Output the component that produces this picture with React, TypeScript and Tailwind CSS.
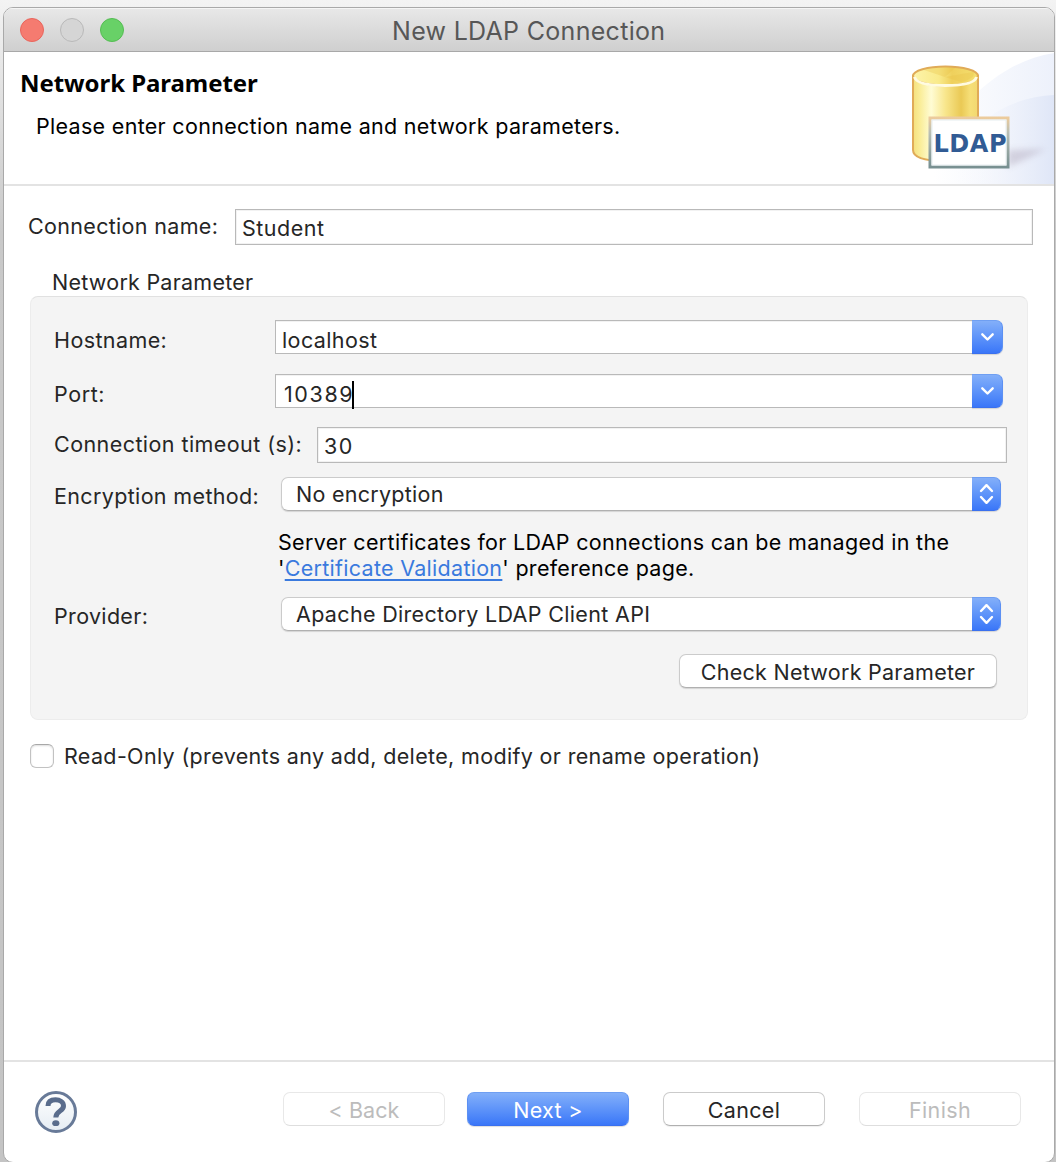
import type { ReactNode } from "react";

const text = "font-['Inter',sans-serif] text-[21.5px] leading-[26px] whitespace-nowrap";

function Chevrons({ both = false }: { both?: boolean }) {
  return (
    <svg viewBox="0 0 30 34" className="h-[34px] w-[30px]" fill="none" stroke="white" strokeWidth="2.4" strokeLinecap="round" strokeLinejoin="round">
      {both ? (
        <>
          <path d="M9 14 14.500 8.200 20 14" />
          <path d="M9 20 14.500 25.800 20 20" />
        </>
      ) : (
        <path d="M10.3 14.3 15.5 19.5 20.7 14.3" />
      )}
    </svg>
  );
}

function TextField({ className, children }: { className: string; children: ReactNode }) {
  return (
    <div className={`${text} box-border border border-[#b9b9b9] bg-white text-[#262626] shadow-[inset_0_0_0_1px_#f2f2f2] ${className}`}>
      {children}
    </div>
  );
}

function Combo({ className, children }: { className: string; children: ReactNode }) {
  return (
    <div className={`flex h-[34px] w-[728px] ${className}`}>
      <div className={`${text} h-full w-[697px] border border-r-0 border-[#b9b9b9] bg-white pt-[6px] text-[#262626] shadow-[inset_0_1px_0_#f2f2f2]`}>{children}</div>
      <div className="h-full w-[31px] rounded-r-[7px] border border-l-0 border-t-[#6f9ff2] border-r-[#5c90f3] border-b-[#3a70ee] bg-linear-to-b from-[#83aff9] to-[#3a76f8] shadow-[0_1px_1px_#0002]">
        <div className="-mt-px"><Chevrons /></div>
      </div>
    </div>
  );
}

function Select({ className, children }: { className: string; children: ReactNode }) {
  return (
    <div className={`flex h-[34px] w-[720px] rounded-[7px] shadow-[0_1px_1px_#0002] ${className}`}>
      <div className={`${text} h-full w-[691px] rounded-l-[7px] border border-r-0 border-[#cbcbcb] border-b-[#b0b0b0] bg-white pt-[3px] pl-[14px] text-[#262626]`}>{children}</div>
      <div className="h-full w-[29px] rounded-r-[7px] border border-l-0 border-t-[#6f9ff2] border-r-[#5c90f3] border-b-[#3a70ee] bg-linear-to-b from-[#83aff9] to-[#3a76f8]">
        <div className="-mt-px w-[30px]"><Chevrons both /></div>
      </div>
    </div>
  );
}

function Button({ className, children }: { className: string; children: ReactNode }) {
  return (
    <button className={`${text} flex h-[34px] justify-center rounded-[7px] border pt-[4px] ${className}`}>{children}</button>
  );
}

function LdapBanner() {
  return (
    <svg viewBox="0 0 150 132" className="ml-auto h-[132px] w-[150px] shrink-0">
      <defs>
        <linearGradient id="body" x1="0" x2="1">
          <stop offset="0" stopColor="#f5e07c" />
          <stop offset=".12" stopColor="#faee9c" />
          <stop offset=".28" stopColor="#fffcd4" />
          <stop offset=".5" stopColor="#f8e68c" />
          <stop offset=".74" stopColor="#eac955" />
          <stop offset=".88" stopColor="#f6df78" />
          <stop offset="1" stopColor="#f2d870" />
        </linearGradient>
        <linearGradient id="lid" x1="0" x2="1">
          <stop offset="0" stopColor="#fdf4aa" />
          <stop offset=".4" stopColor="#f9ea8a" />
          <stop offset=".6" stopColor="#efd05c" />
          <stop offset="1" stopColor="#f5df70" />
        </linearGradient>
        <linearGradient id="sky" x1="0" x2="1">
          <stop offset=".2" stopColor="#fff" />
          <stop offset="1" stopColor="#edf1fb" />
        </linearGradient>
        <linearGradient id="hill" x1="0" x2="1">
          <stop offset=".2" stopColor="#fff" stopOpacity="0" />
          <stop offset="1" stopColor="#dfe6f7" />
        </linearGradient>
        <linearGradient id="frame" x1="0" y1="0" x2="0" y2="1">
          <stop offset="0" stopColor="#eccb9c" />
          <stop offset=".3" stopColor="#b9bfb5" />
          <stop offset="1" stopColor="#789091" />
        </linearGradient>
        <filter id="soft" x="-30%" y="-50%" width="160%" height="200%"><feGaussianBlur stdDeviation="3" /></filter>
      </defs>
      <path d="M0 132C20 112 50 60 76 38 96 20 120 6 150 1V132Z" fill="url(#sky)" />
      <path d="M10 132C45 112 70 72 96 58 114 48 132 44 150 43V132Z" fill="url(#hill)" />
      <path d="M104 98 142 97 122 107 104 115Z" fill="#b0a8bc" opacity=".45" filter="url(#soft)" />
      <path d="M9 24V98C9 106 22 109 41 109 60 109 74 105 74 98V24Z" fill="url(#body)" stroke="#e0ab58" strokeWidth="2" />
      <ellipse cx="41.500" cy="24" rx="32.500" ry="9.500" fill="url(#lid)" stroke="#e0ab58" strokeWidth="2" />
      <path d="M10.500 25C12 31 24 33.500 41.500 33.500S71 31 72.500 25" fill="none" stroke="#fffbe0" strokeWidth="3" />
      <path d="M41 25 20 18C29 15 43 14.500 51 16ZM41 25 69 20C72 24 66 28 57 30Z" fill="#e8bf45" opacity=".3" />
      <rect x="26" y="66" width="78" height="49" fill="#fff" stroke="url(#frame)" strokeWidth="3" />
      <rect x="28" y="68" width="74" height="45" fill="none" stroke="#e6edf0" />
      <text x="29.500" y="99.500" textLength="73" lengthAdjust="spacing" fontFamily="DejaVu Sans" fontWeight="bold" fontSize="24" fill="#315b94">LDAP</text>
    </svg>
  );
}

export default function App() {
  return (
    <div className="h-[1162px] w-[1056px] overflow-hidden bg-linear-to-b from-[#f3f3f3] via-[#c9c9c9] via-20% to-[#c4c4c4] pt-[7px] pl-[3px]">
      <div className="flex h-[1156px] w-[1052px] flex-col overflow-hidden rounded-[10px] border border-[#a9a9a9] bg-white">
        <div className="flex h-[44px] shrink-0 border-b border-[#a8a8a8] bg-linear-to-b from-[#e8e8e8] to-[#cfcfcf] pl-4 shadow-[inset_0_1px_0_#f5f5f5]">
          <div className="mt-[10px] flex w-[372px] gap-4">
            <i className="size-6 rounded-full border border-[#e9655c] bg-[#f57b70]" />
            <i className="size-6 rounded-full border border-[#b9b9b9] bg-[#d5d5d5]" />
            <i className="size-6 rounded-full border border-[#55bd53] bg-[#68d167]" />
          </div>
          <h1 className="mt-[8px] font-['Inter',sans-serif] text-[25px] leading-[30px] tracking-[0.3px] whitespace-nowrap text-[#575757]">New LDAP Connection</h1>
        </div>

        <header className="flex h-[134px] shrink-0 border-b-2 border-[#e3e3e3]">
          <div>
            <h2 className="mt-[15px] ml-4 font-['Noto_Sans',sans-serif] text-2xl leading-8 font-bold tracking-[-0.06px] whitespace-nowrap text-black">Network Parameter</h2>
            <p className={`${text} mt-[14px] ml-8 tracking-[0.302px] text-black`}>Please enter connection name and network parameters.</p>
          </div>
          <LdapBanner />
        </header>

        <main className="flex-1 text-[#262626]">
          <div className="mt-[23px] flex h-9 pl-6">
            <label className={`${text} mt-1 w-[207px] tracking-[0.32px]`}>Connection name:</label>
            <TextField className="h-9 w-[798px] pt-[5px] pl-[6px] tracking-[0.5px]">Student</TextField>
          </div>

          <h3 className={`${text} mt-6 ml-12 tracking-[0.24px]`}>Network Parameter</h3>
          <section className="mt-px ml-[26px] h-[424px] w-[998px] rounded-[8px] border border-[#ececec] border-t-[#e1e1e1] bg-[#f4f4f4] pt-[23px] pl-[23px]">
            <div className="flex h-[54px]">
              <label className={`${text} mt-[7px] w-[221px] tracking-[0.4px]`}>Hostname:</label>
              <Combo className="tracking-[0.4px]"><span className="ml-[6px]">localhost</span></Combo>
            </div>
            <div className="flex h-[53px]">
              <label className={`${text} mt-[7px] w-[221px] tracking-[0.6px]`}>Port:</label>
              <Combo className="tracking-[1.6px]">
                <span className="ml-[8px] inline-block">10389</span><i className="ml-[-2px] inline-block h-[28px] w-[2px] bg-black align-[-7px]" />
              </Combo>
            </div>
            <div className="flex h-[50px]">
              <label className={`${text} mt-[4px] w-[263px] tracking-[0.43px]`}>Connection timeout (s):</label>
              <TextField className="h-9 w-[690px] pt-[5px] pl-[6px] tracking-[1.4px]">30</TextField>
            </div>
            <div className="flex h-[53px]">
              <label className={`${text} mt-[6px] w-[227px] tracking-[0.35px]`}>Encryption method:</label>
              <Select className="tracking-[0.27px]">No encryption</Select>
            </div>
            <p className={`${text} -mt-px h-[68px] pl-[224px] text-black`}>
              <span className="tracking-[0.32px]">Server certificates for LDAP connections can be managed in the</span><br />
              <span className="tracking-[0.285px]">'<a className="text-[#3a7ade] underline decoration-2 underline-offset-[3px] [text-decoration-skip-ink:none]">Certificate Validation</a>' preference page.</span>
            </p>
            <div className="flex h-[57px]">
              <label className={`${text} mt-[6px] w-[227px] tracking-[0.33px]`}>Provider:</label>
              <Select className="tracking-[0.33px]">Apache Directory LDAP Client API</Select>
            </div>
            <Button className="ml-[625px] w-[318px] border-[#cbcbcb] border-b-[#b0b0b0] bg-white tracking-[0.262px] shadow-[0_1px_1px_#0002]">Check Network Parameter</Button>
          </section>

          <div className="mt-6 ml-[26px] flex">
            <i className="size-6 rounded-[6px] border border-[#c2c2c2] border-t-[#a8a8a8] bg-white shadow-[inset_0_1px_2px_#0002]" />
            <label className={`${text} -mt-px ml-[10px] tracking-[0.345px]`}>Read-Only (prevents any add, delete, modify or rename operation)</label>
          </div>
        </main>

        <footer className="flex h-[102px] shrink-0 border-t-2 border-[#e3e3e3] pt-[30px] pl-[31px]">
          <svg viewBox="0 0 42 42" className="-mt-px mr-[206px] size-[42px]">
            <defs>
              <linearGradient id="help" x1="0" y1="0" x2="0" y2="1"><stop offset="0" stopColor="#fff" /><stop offset="1" stopColor="#e5ecf3" /></linearGradient>
            </defs>
            <circle cx="21" cy="21" r="19.500" fill="url(#help)" stroke="#687a98" strokeWidth="3" />
            <path d="M13 15C13 10.500 16 8.800 20.500 8.800S28.500 11 28.500 15C28.500 20.500 20.800 19.500 20.800 26.500" fill="none" stroke="#596c8c" strokeWidth="5" />
            <ellipse cx="20.800" cy="32.200" rx="3.600" ry="2.900" fill="#596c8c" />
          </svg>
          <Button className="w-[162px] border-[#e8e8e8] border-b-[#dedede] tracking-[0.06px] text-[#bcbcbc]">&lt; Back</Button>
          <Button className="ml-[22px] w-[162px] border-t-[#6f9ff2] border-x-[#5c90f3] border-b-[#3a70ee] bg-linear-to-b from-[#83aff9] to-[#3a76f8] tracking-[0.3px] text-white shadow-[0_1px_1px_#0002]">Next &gt;</Button>
          <Button className="ml-[34px] w-[162px] border-[#cbcbcb] border-b-[#b0b0b0] tracking-[0.34px] text-[#262626] shadow-[0_1px_1px_#0001]">Cancel</Button>
          <Button className="ml-[34px] w-[162px] border-[#e8e8e8] border-b-[#dedede] tracking-[0.37px] text-[#bcbcbc]">Finish</Button>
        </footer>
      </div>
    </div>
  );
}
